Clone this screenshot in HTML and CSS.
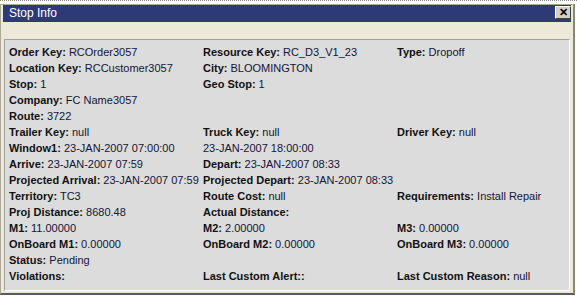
FILE: index.html
```html
<!DOCTYPE html>
<html lang="en">
<head>
    <meta charset="UTF-8">
    <title>Stop Info</title>
    <link rel="stylesheet" href="styles.css">
</head>
<body>

    <div class="topline"></div>
    <div class="window">
        <div class="titlebar">
            <span class="title">Stop Info</span>
            <span class="close">&#x2715;</span>
        </div>
        <div class="toolbar"></div>
        <div class="panel">
            <div class="grid">
                <div class="cell"><b>Order Key:</b> RCOrder3057</div>
                <div class="cell"><b>Resource Key:</b> RC_D3_V1_23</div>
                <div class="cell"><b>Type:</b> Dropoff</div>

                <div class="cell"><b>Location Key:</b> RCCustomer3057</div>
                <div class="cell"><b>City:</b> BLOOMINGTON</div>
                <div class="cell"></div>

                <div class="cell"><b>Stop:</b> 1</div>
                <div class="cell"><b>Geo Stop:</b> 1</div>
                <div class="cell"></div>

                <div class="cell"><b>Company:</b> FC Name3057</div>
                <div class="cell"></div>
                <div class="cell"></div>

                <div class="cell"><b>Route:</b> 3722</div>
                <div class="cell"></div>
                <div class="cell"></div>

                <div class="cell"><b>Trailer Key:</b> null</div>
                <div class="cell"><b>Truck Key:</b> null</div>
                <div class="cell"><b>Driver Key:</b> null</div>

                <div class="cell"><b>Window1:</b> 23-JAN-2007 07:00:00</div>
                <div class="cell">23-JAN-2007 18:00:00</div>
                <div class="cell"></div>

                <div class="cell"><b>Arrive:</b> 23-JAN-2007 07:59</div>
                <div class="cell"><b>Depart:</b> 23-JAN-2007 08:33</div>
                <div class="cell"></div>

                <div class="cell"><b>Projected Arrival:</b> 23-JAN-2007 07:59</div>
                <div class="cell"><b>Projected Depart:</b> 23-JAN-2007 08:33</div>
                <div class="cell"></div>

                <div class="cell"><b>Territory:</b> TC3</div>
                <div class="cell"><b>Route Cost:</b> null</div>
                <div class="cell"><b>Requirements:</b> Install Repair</div>

                <div class="cell"><b>Proj Distance:</b> 8680.48</div>
                <div class="cell"><b>Actual Distance:</b></div>
                <div class="cell"></div>

                <div class="cell"><b>M1:</b> 11.00000</div>
                <div class="cell"><b>M2:</b> 2.00000</div>
                <div class="cell"><b>M3:</b> 0.00000</div>

                <div class="cell"><b>OnBoard M1:</b> 0.00000</div>
                <div class="cell"><b>OnBoard M2:</b> 0.00000</div>
                <div class="cell"><b>OnBoard M3:</b> 0.00000</div>

                <div class="cell"><b>Status:</b> Pending</div>
                <div class="cell"></div>
                <div class="cell"></div>

                <div class="cell"><b>Violations:</b></div>
                <div class="cell"><b>Last Custom Alert::</b></div>
                <div class="cell"><b>Last Custom Reason:</b> null</div>
            </div>
        </div>
    </div>

</body>
</html>
```

FILE: styles.css
```css
body {
    margin: 0;
    background-color: #fff;
    font-family: "Liberation Sans", Arial, sans-serif;
    overflow: hidden;
}

.topline {
    height: 1px;
    margin-bottom: 2px;
    border-top: 1px dotted #888;
}

.window {
    width: 575px;
    height: 291px;
    background-color: #ece9d8;
    border: 1px solid #aca899;
    border-right: 2px solid #8a877a;
    border-bottom: 2px solid #5a5a5a;
    box-sizing: border-box;
    padding: 0 2px;
}

.titlebar {
    display: flex;
    align-items: flex-start;
    justify-content: space-between;
    height: 17px;
    background-color: #2e3a78;
    padding: 0 0 0 6px;
}

.title {
    color: #fff;
    font-size: 12px;
    line-height: 17px;
}

.close {
    margin-top: 1px;
    width: 14px;
    height: 11px;
    line-height: 11px;
    text-align: center;
    background-color: #d4d0c8;
    border: 1px solid #fff;
    border-right-color: #404040;
    border-bottom-color: #404040;
    font-size: 11px;
    font-weight: bold;
    color: #000;
}

.toolbar {
    height: 17px;
}

.panel {
    margin: 0 1px;
    height: 252px;
    background-color: #dcdcdc;
    border: 1px solid #a0a0a0;
    border-right-color: #fff;
    border-bottom-color: #fff;
    box-sizing: border-box;
    padding: 4px 0 0 4px;
}

.grid {
    display: grid;
    grid-template-columns: 194px 194px 160px;
    grid-auto-rows: 16px;
}

.cell {
    font-size: 11px;
    line-height: 16px;
    white-space: nowrap;
    color: #141438;
}

.cell b {
    color: #111;
}
```
